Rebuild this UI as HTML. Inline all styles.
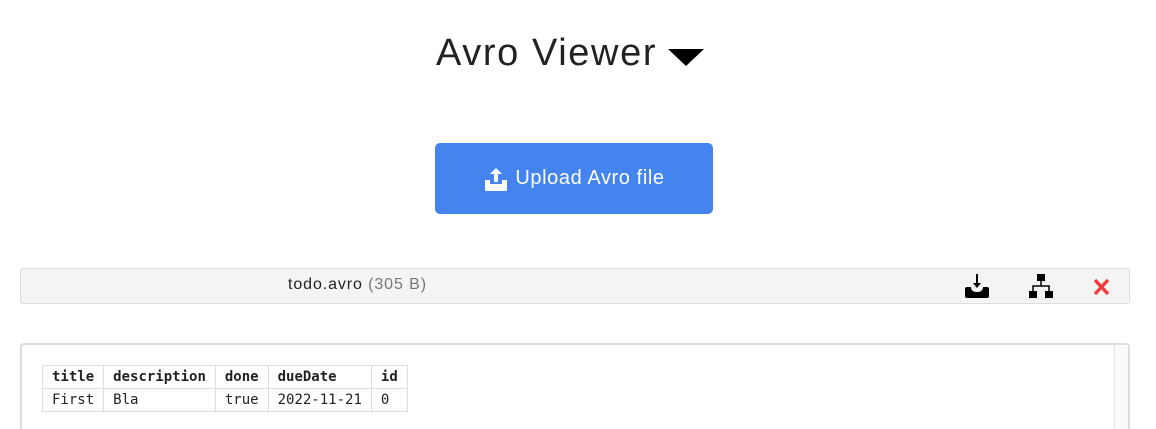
<!DOCTYPE html>
<html><head><style>
html,body{margin:0;width:1156px;height:429px;overflow:hidden}
body{background:#fff;font-family:"Liberation Sans",sans-serif;position:relative}
.abs{position:absolute}
h1{position:absolute;left:436px;top:30px;margin:0;font-size:38px;font-weight:400;color:#222;line-height:46px;letter-spacing:1.6px;white-space:nowrap}
.btn{left:435px;top:143px;width:278px;height:71px;background:#4384ee;border-radius:5px;color:#fff;font-size:20px;letter-spacing:0.6px;display:flex;align-items:center;justify-content:center}
.bar{left:20px;top:268px;width:1108px;height:34px;background:#f4f4f4;border:1px solid #ddd;border-radius:3px}
.panel{left:20px;top:343px;width:1106px;height:84px;border:2px solid #ddd;border-bottom:none;border-radius:4px 4px 0 0}
table{position:absolute;left:42px;top:365px;border-collapse:collapse;font-family:"DejaVu Sans Mono",monospace;font-size:14px;color:#222}
td,th{border:1px solid #ddd;height:22px;padding:0 9px;text-align:left}
th{font-weight:bold}
</style></head><body>
<h1>Avro Viewer</h1>
<div class="abs" style="left:668px;top:49px;width:0;height:0;border-left:18px solid transparent;border-right:18px solid transparent;border-top:17px solid #000"></div>
<div class="abs btn"><svg width="26" height="26" viewBox="0 0 26 26" style="margin-right:6px"><path d="M13 2 L7 8 H11 V16 H15 V8 H19 Z" fill="#fff"/><path d="M2 14 H7 V18 H19 V14 H24 V24 Q24 25 23 25 H3 Q2 25 2 24 Z" fill="#fff"/></svg>Upload Avro file</div>
<div class="abs bar"></div>
<div class="abs" style="left:288px;top:276px;font-size:16px;letter-spacing:0.9px;color:#222;white-space:nowrap">todo.avro <span style="color:#777">(305 B)</span></div>
<svg class="abs" style="left:964px;top:273px" width="26" height="26" viewBox="0 0 26 26"><path d="M12 1 H14 V10 H17 L13 15 L9 10 H12 Z" fill="#000"/><path d="M1 16 Q1 14 3 14 H7 Q7 19 13 19 Q19 19 19 14 H23 Q25 14 25 16 V23 Q25 25 23 25 H3 Q1 25 1 23 Z" fill="#000"/></svg>
<svg class="abs" style="left:1029px;top:273px" width="24" height="26" viewBox="0 0 24 26"><rect x="8" y="1" width="8" height="7" fill="#000"/><path d="M12 8 V13 M4 18 V13 H20 V18" stroke="#000" stroke-width="1.5" fill="none"/><rect x="0" y="18" width="8" height="7" fill="#000"/><rect x="16" y="18" width="8" height="7" fill="#000"/></svg>
<svg class="abs" style="left:1093px;top:279px" width="17" height="16" viewBox="0 0 17 16"><path d="M2 1 L15 15 M15 1 L2 15" stroke="#f03c3c" stroke-width="3.4"/></svg>
<div class="abs panel"></div>
<div class="abs" style="left:1114px;top:345px;width:13px;height:84px;background:#fafafa;border-left:1px solid #e6e6e6"></div>
<table><tr><th>title</th><th>description</th><th>done</th><th>dueDate</th><th>id</th></tr>
<tr><td>First</td><td>Bla</td><td>true</td><td>2022-11-21</td><td>0</td></tr></table>
</body></html>
